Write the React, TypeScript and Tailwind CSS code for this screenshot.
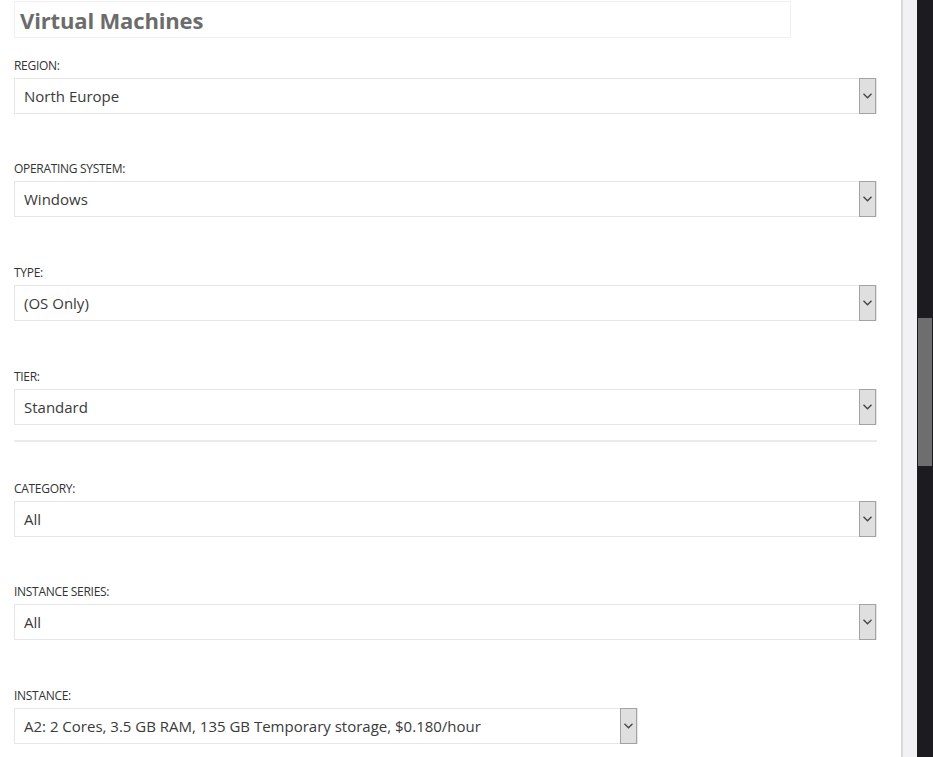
import React from "react";

const font = { fontFamily: '"Open Sans", "Noto Sans", sans-serif' };

function Chevron() {
  return (
    <svg width="9" height="6" viewBox="0 0 9 6" className="text-[#444]">
      <path d="M0.5 0.8 L4.5 4.8 L8.5 0.8" fill="none" stroke="currentColor" strokeWidth="1.3" />
    </svg>
  );
}

function Field({ label, value, mt, w = "w-[863px]" }: { label: string; value: string; mt: string; w?: string }) {
  return (
    <div className={mt}>
      <div className="h-4 leading-4 text-[12px] text-[#333] uppercase tracking-[-0.3px]">{label}</div>
      <div className={`mt-1 ${w} h-[36px] border border-[#e6e6e6] flex items-center justify-between bg-white`}>
        <span className="pl-[9px] text-[15px] text-[#3a3a3a]">{value}</span>
        <div className="w-[17px] h-[36px] -my-px bg-[#dfdfdf] border border-[#a3a3a3] flex items-center justify-center">
          <Chevron />
        </div>
      </div>
    </div>
  );
}

export default function App() {
  return (
    <div className="flex w-[933px] h-[757px] overflow-hidden bg-white" style={font}>
      <div className="w-[901px] pl-[14px] pt-px">
        <div className="w-[777px] h-[37px] border border-[#f0f0f0] flex items-center pl-[5px] pt-px">
          <span className="text-[22px] font-bold text-[#6c6c6c] tracking-[-0.15px]">Virtual Machines</span>
        </div>
        <Field label="Region:" value="North Europe" mt="mt-[20px]" />
        <Field label="Operating system:" value="Windows" mt="mt-[47px]" />
        <Field label="Type:" value="(OS Only)" mt="mt-[48px]" />
        <Field label="Tier:" value="Standard" mt="mt-[48px]" />
        <div className="mt-[15px] w-[863px] h-[2px] bg-[#ebebeb]" />
        <Field label="Category:" value="All" mt="mt-[39px]" />
        <Field label="Instance series:" value="All" mt="mt-[47px]" />
        <Field
          label="Instance:"
          value="A2: 2 Cores, 3.5 GB RAM, 135 GB Temporary storage, $0.180/hour"
          mt="mt-[48px]"
          w="w-[624px]"
        />
      </div>
      <div className="w-[2px] bg-[#d9d9d9]" />
      <div className="w-[14px] bg-[#f2f2f4]" />
      <div className="w-[16px] bg-[#1c1c20] flex flex-col pl-px">
        <div className="mt-[318px] w-[14px] h-[148px] bg-[#6e6e6e]" />
      </div>
    </div>
  );
}
